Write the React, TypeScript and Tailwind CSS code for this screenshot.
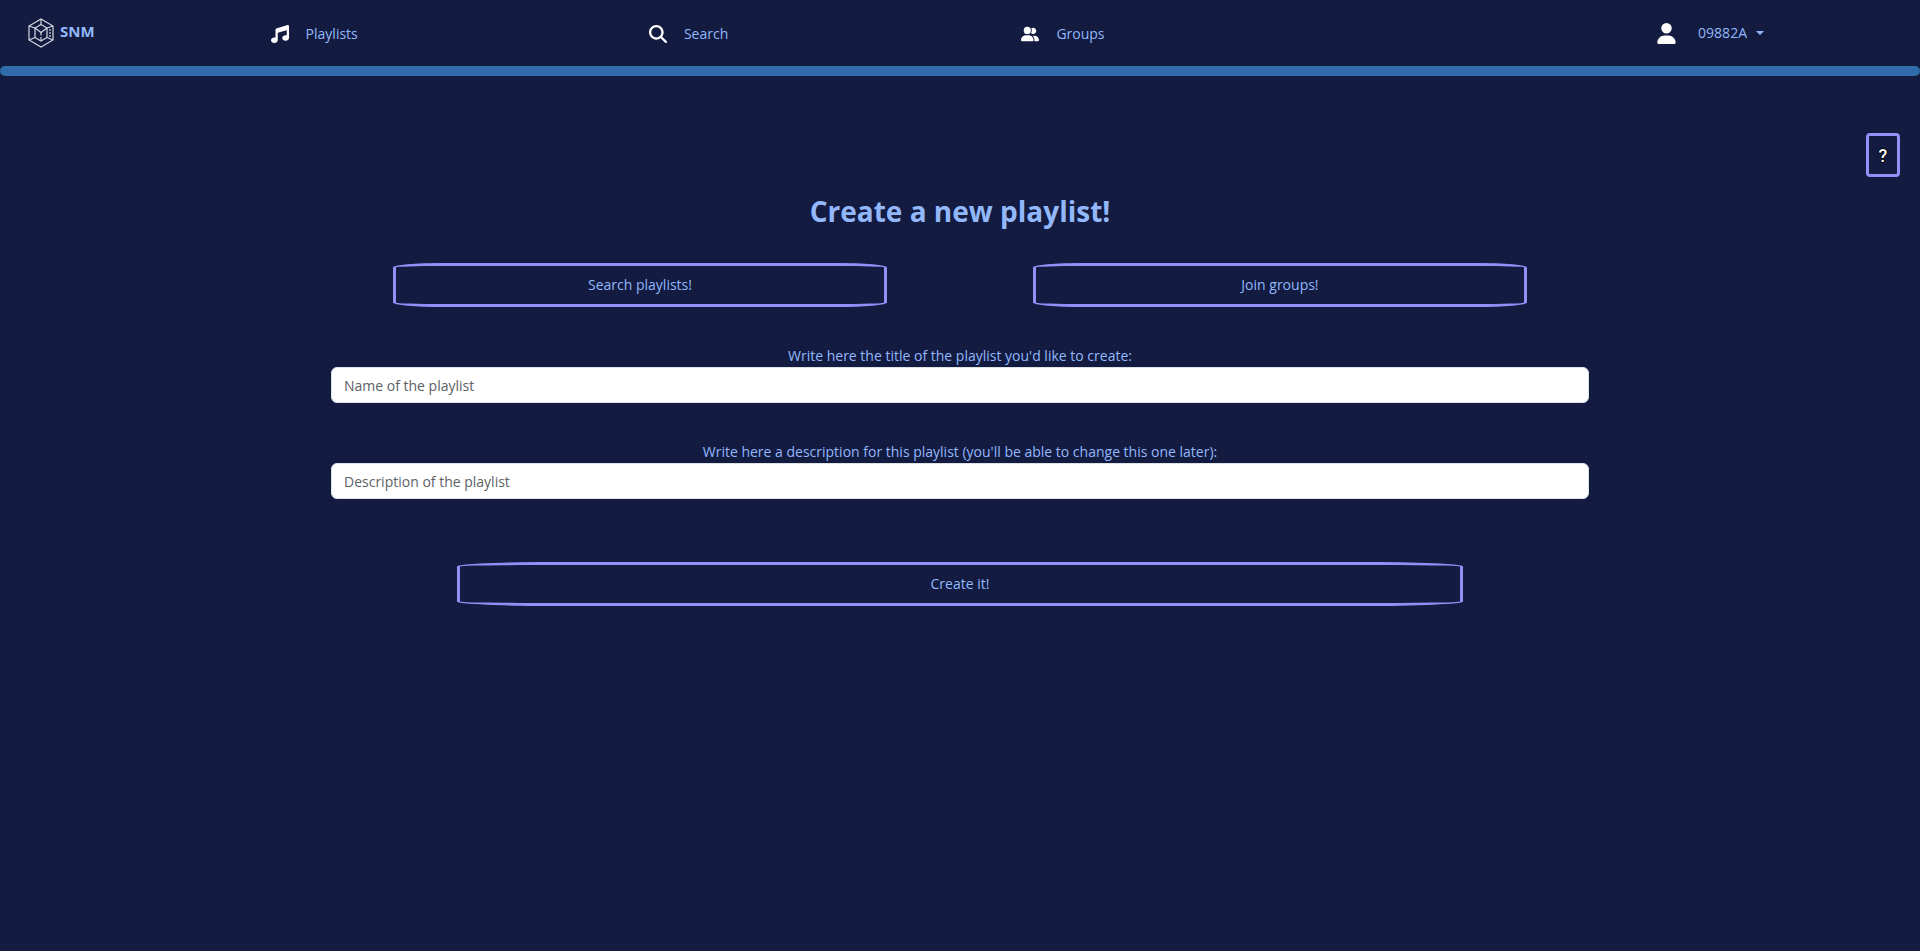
import { FaMagnifyingGlass, FaMusic, FaUser, FaUserGroup } from "react-icons/fa6";

const links = [
  { label: "Playlists", Icon: FaMusic },
  { label: "Search", Icon: FaMagnifyingGlass },
  { label: "Groups", Icon: FaUserGroup },
];

const outlined =
  "block w-4/5 rounded-[10%] border-[3px] border-[#948ff8] py-2 text-center leading-[22px] text-[#92b8fb]";

function Logo() {
  return (
    <svg viewBox="0 0 26 30" className="h-[30px] w-[26px]" fill="none" stroke="#d5d7e2" strokeWidth="1.2" aria-hidden="true">
      <path d="M13 1 25 8V22L13 29 1 22V8Z" />
      <path d="M13 6.5 19 10V19.5L13 23 7 19.5V10Z" />
      <path d="M7 10 13 14.5 19 10M13 1V6.5M1 8 7 10M25 8 19 10M1 22 7 19.5M25 22 19 19.5" />
      <path d="M13 14.5V23" strokeDasharray="3 1.5" />
      <path d="M22 11V20" strokeDasharray="2 1" />
    </svg>
  );
}

function Field({ id, label, placeholder }: { id: string; label: string; placeholder: string }) {
  return (
    <div className="flex flex-col">
      <label htmlFor={id} className="text-center leading-[22px]">
        {label}
      </label>
      <input
        id={id}
        type="text"
        placeholder={placeholder}
        className="h-9 w-full rounded-md border border-[#dee2e6] bg-white px-3 text-[#212529] placeholder:text-[#5c6166]"
      />
    </div>
  );
}

export default function App() {
  return (
    <div className="min-h-screen bg-[#131b40] font-['Open_Sans','Noto_Sans',sans-serif] text-sm text-[#92b8fb]">
      <header>
        <nav className="flex h-[66px] items-center">
          <a href="#" className="flex w-[127px] items-center gap-1.5 pl-7 text-[15px] font-bold">
            <Logo />
            <span className="pb-0.5">SNM</span>
          </a>
          {links.map(({ label, Icon }) => (
            <a key={label} href="#" className="flex w-[19.5%] items-center justify-center gap-[17px] pt-0.5">
              <Icon size={18} className="text-white" />
              <span>{label}</span>
            </a>
          ))}
          <button type="button" className="mr-[156px] ml-auto flex items-center">
            <FaUser size={21} className="text-white" />
            <span className="ml-[21px]">09882A</span>
            <svg viewBox="0 0 8 4" className="ml-[9px] h-1 w-2" fill="currentColor" aria-hidden="true">
              <path d="M0 0H8L4 4Z" />
            </svg>
          </button>
        </nav>
        <div className="h-[10px] rounded-full bg-[#306cab]" />
      </header>

      <div className="flex justify-end pt-[57px] pr-5">
        <button
          type="button"
          className="h-11 w-[34px] rounded border-[3px] border-[#948ff8] pt-0.5 font-['Roboto',sans-serif] text-lg font-medium text-white [text-shadow:-1px_0_#000,1px_0_#000,0_1px_#000,0_-1px_#000]"
        >
          ?
        </button>
      </div>

      <main className="mx-auto w-2/3 px-[11px]">
        <h1 className="pt-4 text-center text-[28px] leading-9 font-bold">Create a new playlist!</h1>

        <div className="-mx-[11px] mt-[34px] grid grid-cols-2">
          <div className="flex justify-center px-[11px]">
            <a href="#" className={outlined}>Search playlists!</a>
          </div>
          <div className="flex justify-center px-[11px]">
            <a href="#" className={outlined}>Join groups!</a>
          </div>
        </div>

        <form className="mt-[38px] flex flex-col gap-[38px]">
          <Field id="title" label="Write here the title of the playlist you'd like to create:" placeholder="Name of the playlist" />
          <Field
            id="description"
            label="Write here a description for this playlist (you'll be able to change this one later):"
            placeholder="Description of the playlist"
          />
          <div className="flex justify-center pt-[25px]">
            <button type="button" className={outlined}>Create it!</button>
          </div>
        </form>
      </main>
    </div>
  );
}
